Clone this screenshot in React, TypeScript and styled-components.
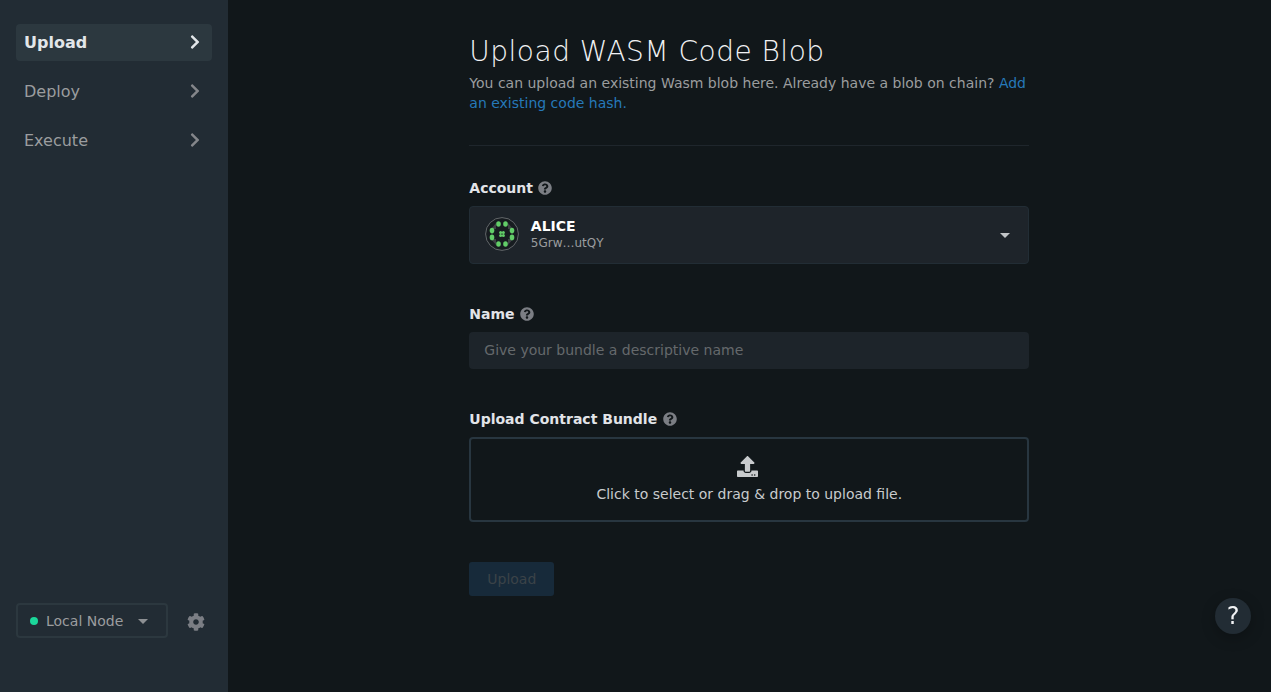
import React from "react";
import styled, { createGlobalStyle } from "styled-components";
import { FaChevronRight, FaCog, FaQuestionCircle, FaUpload } from "react-icons/fa";

const GlobalStyle = createGlobalStyle`
  *, *::before, *::after { box-sizing: border-box; }
  body { margin: 0; background: #11171a; }
`;

const Page = styled.div`
  display: flex;
  height: 100vh;
  overflow: hidden;
  background: #11171a;
  color: #e2e4e8;
  font-family: "DejaVu Sans", sans-serif;
  font-size: 14px;
  line-height: 20px;
`;

const Sidebar = styled.aside`
  display: flex;
  flex-direction: column;
  justify-content: space-between;
  width: 228px;
  flex-shrink: 0;
  padding: 24px 16px 54px;
  background: #222c34;
`;

const Nav = styled.nav`
  display: flex;
  flex-direction: column;
  gap: 12px;
`;

const NavItem = styled.a<{ $active?: boolean }>`
  display: flex;
  align-items: center;
  justify-content: space-between;
  height: 37px;
  padding: 0 9.5px 0 8px;
  border-radius: 4px;
  font-size: 16px;
  font-weight: ${(p) => (p.$active ? 700 : 400)};
  color: ${(p) => (p.$active ? "#e2e6e9" : "#9b9d9f")};
  background: ${(p) => (p.$active ? "#2c383f" : "transparent")};
  svg {
    margin-bottom: 1px;
    color: ${(p) => (p.$active ? "#e2e6e9" : "#84868a")};
  }
`;

const SidebarFooter = styled.div`
  display: flex;
  align-items: center;
  gap: 19px;
`;

const NodeSelect = styled.div`
  display: flex;
  align-items: center;
  width: 152px;
  height: 35px;
  padding: 0 18px 0 12px;
  border: 2px solid #2c383f;
  border-radius: 4px;
  color: #9b9d9f;
`;

const StatusDot = styled.span`
  width: 8px;
  height: 8px;
  margin-right: 8px;
  border-radius: 50%;
  background: #1bd79a;
`;

const Caret = styled.span<{ $color: string }>`
  margin: 1px 0 0 auto;
  border: 5px solid transparent;
  border-top-color: ${(p) => p.$color};
  border-bottom-width: 0;
`;

const Settings = styled(FaCog)`
  margin-top: 3px;
  color: #7b7e84;
`;

const Main = styled.main`
  flex: 1;
  display: flex;
  justify-content: center;
  padding-top: 32px;
`;

const Content = styled.div`
  width: 560px;
  margin-right: 0.4px;
`;

const Header = styled.header`
  height: 114px;
  border-bottom: 1px solid #1f262c;
`;

const Title = styled.h1`
  margin: 0 0 1px;
  font-size: 28px;
  line-height: 40px;
  font-weight: 200;
  letter-spacing: 0.5px;
  color: #f1f2f4;
`;

const Subtitle = styled.p`
  margin: 0;
  color: #9b9d9f;
`;

const Link = styled.a`
  color: #2679b9;
`;

const Field = styled.section<{ $top: number }>`
  margin-top: ${(p) => p.$top}px;
`;

const Label = styled.label`
  display: flex;
  align-items: center;
  gap: 5.5px;
  margin-bottom: 8px;
  font-weight: 700;
  svg { color: #7b7e84; }
`;

const AccountSelect = styled.div`
  display: flex;
  align-items: center;
  height: 58px;
  padding: 0 18px 0 14.5px;
  border: 1px solid #222d35;
  border-radius: 4px;
  background: #1e242a;
  > svg { margin-bottom: 2px; }
`;

const AccountText = styled.div`
  margin: 0 0 1px 12px;
`;

const AccountName = styled.div`
  line-height: 17px;
  font-weight: 700;
  color: #fff;
`;

const Address = styled.div`
  font-size: 12px;
  line-height: 16px;
  color: #9b9d9f;
`;

const NameInput = styled.input`
  display: block;
  width: 100%;
  height: 37px;
  padding: 0 15px 2px;
  border: 0;
  border-radius: 4px;
  background: #1d242a;
  color: #e2e4e8;
  font: inherit;
  &::placeholder { color: #65696c; }
`;

const DropZone = styled.div`
  display: flex;
  flex-direction: column;
  align-items: center;
  height: 85px;
  padding-top: 17px;
  border: 2px solid #283640;
  border-radius: 4px;
  color: #c8cbcd;
  svg { margin: 0 4px 7px 0; }
`;

const UploadButton = styled.button`
  display: block;
  width: 85px;
  height: 34px;
  margin-top: 40px;
  padding: 0;
  border: 0;
  border-radius: 3px;
  background: #172a3a;
  color: #3b4348;
  font: inherit;
`;

const HelpButton = styled.button`
  position: fixed;
  right: 20px;
  bottom: 58px;
  width: 36px;
  height: 36px;
  padding: 0;
  border: 0;
  border-radius: 50%;
  background: #222c34;
  box-shadow: 0 4px 14px rgba(0, 0, 0, 0.25);
  color: #f1f2f4;
  font: 24px/36px "DejaVu Sans", sans-serif;
`;

const dots = [
  [13.5, 7], [20.5, 7], [7, 13.6], [7, 20.4],
  [27, 13.6], [27, 20.4], [13.5, 27], [20.5, 27],
];

const Identicon = () => (
  <svg width="34" height="34" viewBox="0 0 34 34">
    <circle cx="17" cy="17" r="16.4" fill="#171c20" stroke="#75787b" strokeWidth="0.8" />
    <path d="M6 12L11 6v6zM28 12L23 6v6zM6 22l5 6v-6zM28 22l-5 6v-6z" fill="#3e4145" />
    {dots.map(([x, y]) => (
      <ellipse key={`${x}-${y}`} cx={x} cy={y} rx="2.3" ry="2.8" fill="#62cd68" />
    ))}
    {[15.6, 18.4].map((x) =>
      [15.6, 18.4].map((y) => <circle key={`${x}-${y}`} cx={x} cy={y} r="1.5" fill="#62cd68" />)
    )}
  </svg>
);

const FieldLabel = ({ text }: { text: string }) => (
  <Label>
    {text}
    <FaQuestionCircle size={14} />
  </Label>
);

export default function App() {
  return (
    <Page>
      <GlobalStyle />
      <Sidebar>
        <Nav>
          {["Upload", "Deploy", "Execute"].map((name, i) => (
            <NavItem key={name} $active={i === 0}>
              {name}
              <FaChevronRight size={16} />
            </NavItem>
          ))}
        </Nav>
        <SidebarFooter>
          <NodeSelect>
            <StatusDot />
            Local Node
            <Caret $color="#8d9093" />
          </NodeSelect>
          <Settings size={18} />
        </SidebarFooter>
      </Sidebar>
      <Main>
        <Content>
          <Header>
            <Title>Upload WASM Code Blob</Title>
            <Subtitle>
              You can upload an existing Wasm blob here. Already have a blob on chain?{" "}
              <Link>Add an existing code hash.</Link>
            </Subtitle>
          </Header>
          <Field $top={32}>
            <FieldLabel text="Account" />
            <AccountSelect>
              <Identicon />
              <AccountText>
                <AccountName>ALICE</AccountName>
                <Address>5Grw…utQY</Address>
              </AccountText>
              <Caret $color="#c2c5c8" />
            </AccountSelect>
          </Field>
          <Field $top={40}>
            <FieldLabel text="Name" />
            <NameInput placeholder="Give your bundle a descriptive name" />
          </Field>
          <Field $top={40}>
            <FieldLabel text="Upload Contract Bundle" />
            <DropZone>
              <FaUpload size={21} />
              Click to select or drag &amp; drop to upload file.
            </DropZone>
          </Field>
          <UploadButton disabled>Upload</UploadButton>
        </Content>
      </Main>
      <HelpButton>?</HelpButton>
    </Page>
  );
}
